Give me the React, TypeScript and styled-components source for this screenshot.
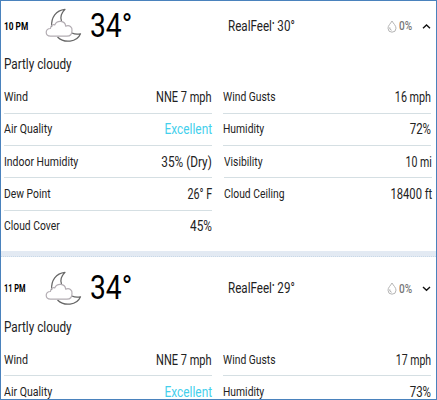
import React from "react";
import styled, { createGlobalStyle } from "styled-components";

const GlobalStyle = createGlobalStyle`
  * { box-sizing: border-box; }
  body { margin: 0; background: #fff; font-family: Roboto, "Liberation Sans", sans-serif; color: #222; }
`;

const Frame = styled.main`
  width: 437px;
  height: 400px;
  overflow: hidden;
  border: 1px solid #4a82bd;
  background: #fff;
`;

const HourCard = styled.section`
  height: 262.5px;
  display: flex;
  flex-direction: column;
`;

const Header = styled.header`
  height: 50px;
  flex: none;
  display: grid;
  grid-template-columns: 41px 45px 138px 159px 1fr;
  align-items: center;
  padding-left: 3px;
`;

/* Condensed lettering: the face is narrowed from its anchored edge. */
const Condensed = styled.span<{ $x?: number; $end?: boolean }>`
  display: inline-block;
  white-space: nowrap;
  transform: scaleX(${(p) => p.$x ?? 0.84});
  transform-origin: ${(p) => (p.$end ? "right" : "left")} center;
`;

const Time = styled(Condensed)`
  font-size: 10px;
  font-weight: 700;
  color: #000;
`;

const Temperature = styled(Condensed)`
  font-size: 34px;
  line-height: 46px;
  margin-top: -3px;
  color: #000;
`;

const RealFeel = styled(Condensed)`
  font-size: 14px;
  line-height: 16px;
  margin-top: -1px;
`;

const Mark = styled.sup`
  font-size: 9px;
  line-height: 0;
  vertical-align: 5px;
`;

const Precip = styled.div`
  display: grid;
  grid-template-columns: 12px 23px 10px;
  align-items: center;
`;

const PrecipValue = styled(Condensed)`
  font-size: 12px;
  font-weight: 500;
  color: #777;
`;

const Phrase = styled.div`
  height: 30.5px;
  flex: none;
  padding: 5px 0 0 3px;
  font-size: 14px;
  line-height: 17px;
`;

const Details = styled.div`
  display: grid;
  grid-template-columns: 208px 209px;
  column-gap: 11px;
  padding-left: 3px;
  height: 169px;
  flex: none;
`;

const Row = styled.div<{ $line: boolean; $shift?: boolean }>`
  height: 32.25px;
  display: flex;
  justify-content: space-between;
  align-items: center;
  border-bottom: 1px solid ${(p) => (p.$line ? "#d5dfe3" : "transparent")};
  margin-left: ${(p) => (p.$shift ? 1 : 0)}px;
  margin-right: ${(p) => (p.$shift === false ? 1 : 0)}px;
`;

const Label = styled(Condensed)`
  font-size: 12.3px;
`;

const Value = styled(Condensed)<{ $accent?: boolean }>`
  font-size: 14px;
  color: ${(p) => (p.$accent ? "#43cfec" : "#222")};
`;

const Divider = styled.div`
  height: 6px;
  flex: none;
  background: #e3eaf3;
  border-bottom: 1px dotted #c9d9e8;
`;

const Moon = () => (
  <svg width="38" height="36" viewBox="0 0 38 36" fill="none" strokeLinejoin="round">
    <path d="M6.6 19C6 9 11 2.500 20 1.400C15.800 5.500 15 9 16.500 13" stroke="#666" strokeWidth="1.250" />
    <path d="M12.500 29C19 35.500 32 34.500 35.500 25.800C32.500 26.500 29.500 26.300 27 25" stroke="#666" strokeWidth="1.250" />
    <path d="M5.500 28.200C-.2 28.200-.2 20.500 5.400 20.500C6 16.800 8.300 16.300 9.700 16.900C12 11.800 20 12.300 20.700 18.100C24.500 16.600 27.500 19 27 22.500C27 26 25 28.200 22 28.200Z" stroke="#b3adb3" strokeWidth="1.200" />
  </svg>
);

const Drop = () => (
  <svg width="10" height="13" viewBox="0 0 10 13" fill="none">
    <path d="M5 1C3.500 3.800 1 5.500 1 8.200A4 4 0 0 0 9 8.200C9 5.500 6.500 3.800 5 1Z" stroke="#b5b5b5" />
    <path d="M2.800 7.500C2.700 9 3.400 9.800 4.500 10.200" stroke="#999" />
  </svg>
);

const Chevron = ({ up }: { up: boolean }) => (
  <svg width="9" height="7" viewBox="0 0 9 7" fill="none">
    <path d={up ? "M1 5.200 4.500 2 8 5.200" : "M1 2 4.500 5.200 8 2"} stroke="#111" strokeWidth="1.400" />
  </svg>
);

type Item = { label: string; value: string; lx?: number; vx?: number; accent?: boolean };
type Hour = { time: string; feel: string; up: boolean; left: Item[]; right: Item[] };

const hours: Hour[] = [
  {
    time: "10 PM", feel: "30°", up: true,
    left: [
      { label: "Wind", value: "NNE 7 mph", lx: 0.87, vx: 0.787 },
      { label: "Air Quality", value: "Excellent", lx: 0.86, vx: 0.847, accent: true },
      { label: "Indoor Humidity", value: "35% (Dry)", lx: 0.85, vx: 0.845 },
      { label: "Dew Point", value: "26° F", vx: 0.77 },
      { label: "Cloud Cover", value: "45%", vx: 0.845 },
    ],
    right: [
      { label: "Wind Gusts", value: "16 mph", vx: 0.77 },
      { label: "Humidity", value: "72%", vx: 0.82 },
      { label: "Visibility", value: "10 mi", vx: 0.755 },
      { label: "Cloud Ceiling", value: "18400 ft", vx: 0.8 },
    ],
  },
  {
    time: "11 PM", feel: "29°", up: false,
    left: [
      { label: "Wind", value: "NNE 7 mph", lx: 0.87, vx: 0.787 },
      { label: "Air Quality", value: "Excellent", lx: 0.86, vx: 0.847, accent: true },
    ],
    right: [
      { label: "Wind Gusts", value: "17 mph", vx: 0.75 },
      { label: "Humidity", value: "73%", vx: 0.82 },
    ],
  },
];

const Column = ({ items, lines, right }: { items: Item[]; lines: number; right?: boolean }) => (
  <div>
    {items.map((it, i) => (
      <Row key={it.label} $line={i < lines} $shift={right ? i > 1 : undefined}>
        <Label $x={it.lx}>{it.label}</Label>
        <Value $end $x={it.vx} $accent={it.accent}>{it.value}</Value>
      </Row>
    ))}
  </div>
);

export default function App() {
  return (
    <>
      <GlobalStyle />
      <Frame>
        {hours.map((h) => (
          <HourCard key={h.time}>
            <Header>
              <Time $x={h.up ? 0.83 : 0.74}>{h.time}</Time>
              <Moon />
              <Temperature $x={0.83}>34°</Temperature>
              <RealFeel $x={0.83}>RealFeel<Mark>•</Mark> {h.feel}</RealFeel>
              <Precip>
                <Drop />
                <PrecipValue>0%</PrecipValue>
                <Chevron up={h.up} />
              </Precip>
            </Header>
            <Phrase><Condensed>Partly cloudy</Condensed></Phrase>
            <Details>
              <Column items={h.left} lines={4} />
              <Column items={h.right} lines={3} right />
            </Details>
            <Divider />
          </HourCard>
        ))}
      </Frame>
    </>
  );
}
